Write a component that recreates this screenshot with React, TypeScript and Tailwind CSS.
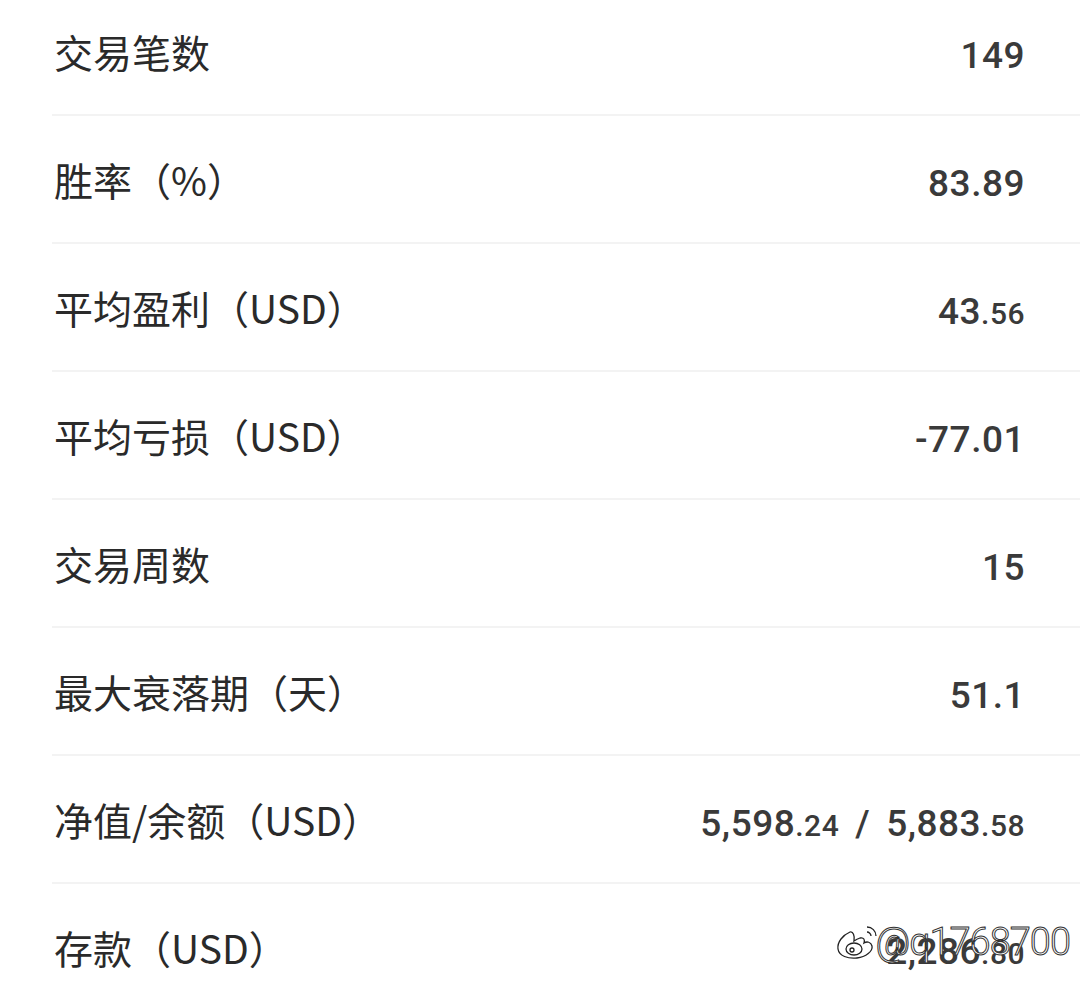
import { memo } from 'react';

interface StatRow {
  label: string;
  value: React.ReactNode;
}

const Num = ({ int, dec }: { int: string; dec?: string }) => (
  <>
    {int}
    {dec !== undefined && <span className="text-[30px]">.{dec}</span>}
  </>
);

const rows: StatRow[] = [
  { label: '交易笔数', value: '149' },
  { label: '胜率（%）', value: '83.89' },
  { label: '平均盈利（USD）', value: <Num int="43" dec="56" /> },
  { label: '平均亏损（USD）', value: '-77.01' },
  { label: '交易周数', value: '15' },
  { label: '最大衰落期（天）', value: '51.1' },
  {
    label: '净值/余额（USD）',
    value: (
      <>
        <Num int="5,598" dec="24" />
        <span className="mx-[16px]">/</span>
        <Num int="5,883" dec="58" />
      </>
    ),
  },
  { label: '存款（USD）', value: <Num int="2,286" dec="80" /> },
];

// 웨이보 스타일 워터마크
const Watermark = memo(() => (
  <div className="absolute right-[10px] top-[920px] flex items-center pointer-events-none">
    <svg width="48" height="44" viewBox="0 0 48 44" fill="none" stroke="#222" strokeWidth="1.3">
      <path d="M16 12c-7 3-13 10-12 17 1 7 10 10 19 9 9-1 16-7 15-12-1-4-5-5-8-3 1-3 0-6-4-5-3 1-6 3-6 3 1-5-1-10-4-9z" />
      <ellipse cx="20" cy="29" rx="8" ry="6" />
      <circle cx="18" cy="30" r="2" />
      <path d="M33 7c5 0 9 4 9 9M33 12c2 0 4 2 4 4" />
    </svg>
    <span className="-ml-[6px] text-[38px] leading-none text-white font-['Roboto',sans-serif] font-light [-webkit-text-stroke:1px_#333] tracking-[-1px]">
      @q1768700
    </span>
  </div>
));

export default function App() {
  return (
    <div className="relative w-[1080px] h-[1002px] overflow-hidden bg-white font-['Roboto','Noto_Sans_CJK_SC',sans-serif]">
      <div className="mt-[-12px] pl-[52px]">
        {rows.map((row) => (
          <div
            key={row.label}
            className="h-[128px] flex items-center justify-between border-b-2 border-[#f3f3f3] pr-[55px]"
          >
            <span className="pl-[2px] text-[39px] text-[#2a2a2a] font-['Noto_Sans_CJK_SC',sans-serif]">
              {row.label}
            </span>
            <span className="pt-[10px] text-[37px] font-medium text-[#3a3a3a] font-['Roboto',sans-serif] tracking-[0.5px]">
              {row.value}
            </span>
          </div>
        ))}
      </div>
      <Watermark />
    </div>
  );
}
